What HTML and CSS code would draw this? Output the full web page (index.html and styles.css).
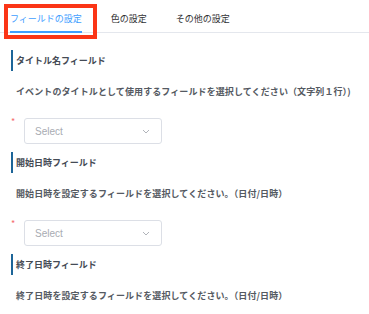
FILE: index.html
```html
<!DOCTYPE html>
<html lang="ja">
<head>
    <meta charset="UTF-8">
    <title>Settings</title>
    <link rel="stylesheet" href="styles.css">
</head>
<body>
    <div class="tabs">
        <div class="tab active">フィールドの設定</div>
        <div class="tab">色の設定</div>
        <div class="tab">その他の設定</div>
    </div>
    <div class="highlight"></div>

    <div class="content">
        <!-- Title field -->
        <div class="section">
            <div class="section-title">タイトル名フィールド</div>
            <div class="desc">イベントのタイトルとして使用するフィールドを選択してください（文字列１行）)</div>
            <div class="form-row">
                <span class="required">*</span>
                <div class="select">
                    <span class="placeholder">Select</span>
                    <svg class="arrow" width="8" height="5" viewBox="0 0 8 5"><path d="M1 1 L4 4 L7 1" fill="none" stroke="#a8abb2" stroke-width="0.9"/></svg>
                </div>
            </div>
        </div>

        <!-- Start date field -->
        <div class="section">
            <div class="section-title">開始日時フィールド</div>
            <div class="desc">開始日時を設定するフィールドを選択してください。（日付/日時）</div>
            <div class="form-row">
                <span class="required">*</span>
                <div class="select">
                    <span class="placeholder">Select</span>
                    <svg class="arrow" width="8" height="5" viewBox="0 0 8 5"><path d="M1 1 L4 4 L7 1" fill="none" stroke="#a8abb2" stroke-width="0.9"/></svg>
                </div>
            </div>
        </div>

        <!-- End date field -->
        <div class="section">
            <div class="section-title">終了日時フィールド</div>
            <div class="desc">終了日時を設定するフィールドを選択してください。（日付/日時）</div>
        </div>
    </div>
</body>
</html>
```

FILE: styles.css
```css
body {
    margin: 0;
    padding: 0;
    background-color: white;
    font-family: "Noto Sans CJK JP", "Noto Sans", sans-serif;
    font-size: 9px;
    color: #303133;
    overflow: hidden;
}

.tabs {
    display: flex;
    margin: 5px 0 0 10px;
    height: 28px;
    position: relative;
}

.tabs::after {
    content: "";
    position: absolute;
    left: -10px;
    right: 0;
    bottom: 0;
    height: 1px;
    background-color: #e4e7ed;
}

.tab {
    position: relative;
    padding: 0 14.5px;
    line-height: 28px;
    color: #303133;
}

.tab:first-child {
    padding-left: 0;
}

.tab.active {
    color: #409eff;
}

.tab.active::after {
    content: "";
    position: absolute;
    left: 0;
    right: 14.5px;
    bottom: 0;
    height: 2px;
    background-color: #409eff;
    z-index: 1;
}

.highlight {
    position: absolute;
    left: 4px;
    top: 4px;
    width: 85px;
    height: 27px;
    border: 4px solid #fb3516;
}

.content {
    padding: 17px 0 0 11px;
}

.section {
    margin-bottom: 8px;
}

.section-title {
    height: 21px;
    line-height: 21px;
    border-left: 2px solid #1d6598;
    padding-left: 3px;
    font-weight: bold;
    color: #454b55;
}

.desc {
    margin-top: 14px;
    padding-left: 5px;
    line-height: 14px;
    white-space: nowrap;
    color: #555a62;
    font-weight: bold;
    letter-spacing: 0.1px;
}

.form-row {
    display: flex;
    margin-top: 19px;
}

.required {
    width: 13px;
    color: #f56c6c;
    font-size: 9px;
    line-height: 8px;
}

.select {
    display: flex;
    align-items: center;
    justify-content: space-between;
    width: 138px;
    height: 26px;
    padding: 0 11px 0 10px;
    box-sizing: border-box;
    border: 1px solid #dcdfe6;
    border-radius: 3px;
}

.placeholder {
    font-family: "Liberation Sans", Arial, sans-serif;
    font-size: 10px;
    color: #a8abb2;
}

.arrow {
    display: block;
}
```
